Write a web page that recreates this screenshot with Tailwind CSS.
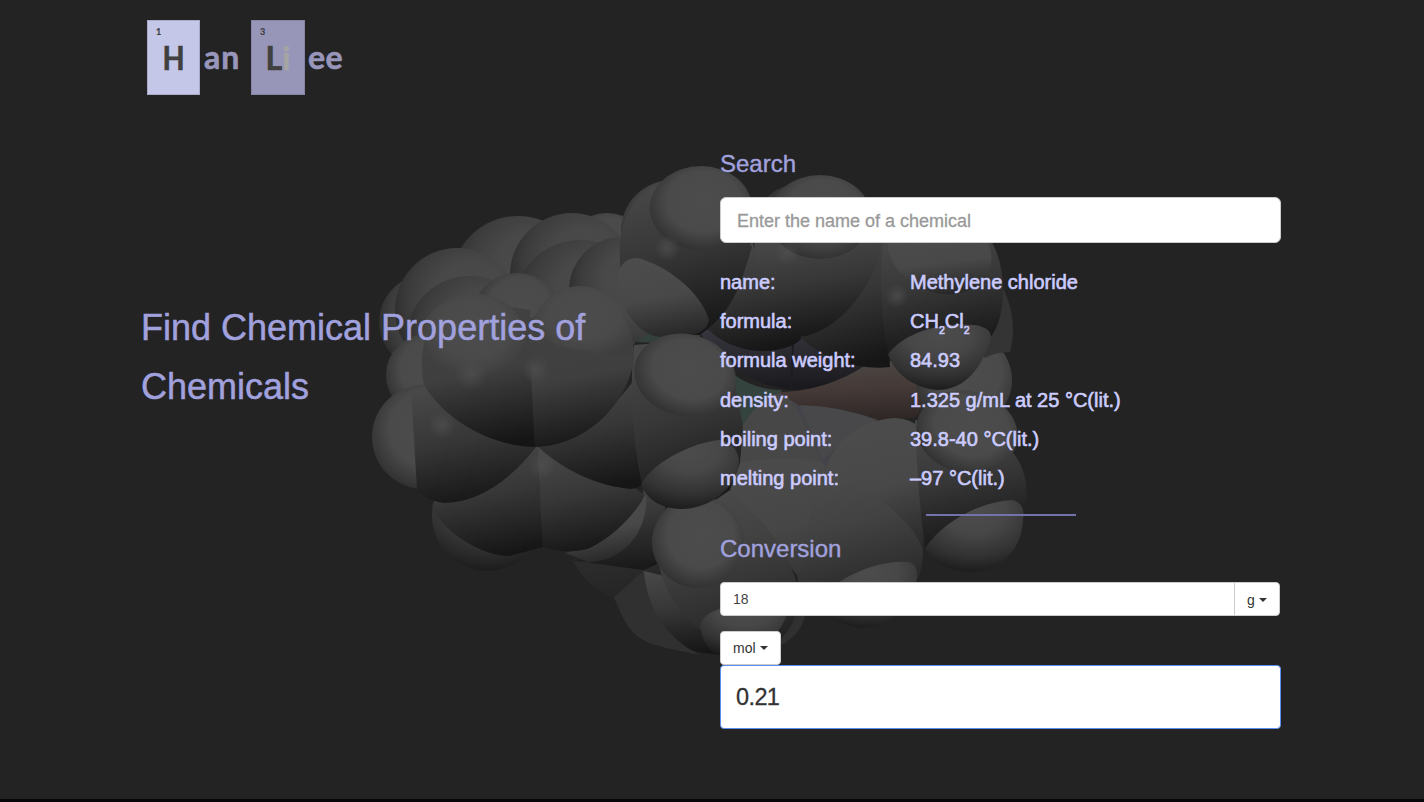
<!DOCTYPE html>
<html lang="en">
<head>
<meta charset="utf-8">
<title>Han Liee</title>
<script src="https://cdn.jsdelivr.net/npm/@tailwindcss/browser@4"></script>
</head>
<body class="relative h-[802px] w-[1424px] overflow-hidden bg-[#232323] font-['Liberation_Sans',sans-serif]">
<svg class="absolute inset-0" width="1424" height="802" viewBox="0 0 1424 802">
  <defs>
    <radialGradient id="s" cx=".5" cy=".15" r=".9"><stop offset="0" stop-color="#4c4c4c"/><stop offset=".35" stop-color="#474747"/><stop offset=".7" stop-color="#323232"/><stop offset="1" stop-color="#181818"/></radialGradient>
    <radialGradient id="r" cx=".62" cy=".42" r=".68"><stop offset="0" stop-color="#4a4a4a"/><stop offset=".45" stop-color="#484848"/><stop offset=".75" stop-color="#3c3c3c"/><stop offset="1" stop-color="#2a2a2a"/></radialGradient>
    <radialGradient id="h" cx=".53" cy=".42" r=".6"><stop offset="0" stop-color="#4c4c4c"/><stop offset=".6" stop-color="#4a4a4a"/><stop offset="1" stop-color="#303030"/></radialGradient>
    <radialGradient id="f" cx=".5" cy=".42" r=".6"><stop offset="0" stop-color="#4c4c4c"/><stop offset=".6" stop-color="#4a4a4a"/><stop offset="1" stop-color="#3e3e3e"/></radialGradient>
    <linearGradient id="c" x1=".35" y1="0" x2=".55" y2="1"><stop offset="0" stop-color="#484848"/><stop offset=".45" stop-color="#373737"/><stop offset="1" stop-color="#161616"/></linearGradient>
    <linearGradient id="a" x1=".4" y1="0" x2=".55" y2="1"><stop offset="0" stop-color="#424242"/><stop offset=".5" stop-color="#3f3f3f"/><stop offset="1" stop-color="#151515"/></linearGradient>
    <linearGradient id="g" x1=".4" y1="0" x2=".6" y2="1"><stop offset="0" stop-color="#4c4c4c"/><stop offset=".5" stop-color="#484848"/><stop offset="1" stop-color="#272727"/></linearGradient>
    <linearGradient id="w" x1=".3" y1="0" x2=".6" y2="1"><stop offset="0" stop-color="#4b4b4b"/><stop offset=".6" stop-color="#464646"/><stop offset="1" stop-color="#363636"/></linearGradient>
    <linearGradient id="v" x1=".3" y1="0" x2=".55" y2="1"><stop offset="0" stop-color="#4a4a4a"/><stop offset=".35" stop-color="#424242"/><stop offset=".75" stop-color="#2f2f2f"/><stop offset="1" stop-color="#222"/></linearGradient>
    <linearGradient id="d" x1="0" y1="0" x2=".2" y2="1"><stop offset="0" stop-color="#333"/><stop offset="1" stop-color="#1a1a1a"/></linearGradient>
    <linearGradient id="p" x1="0" y1="0" x2=".1" y2="1"><stop offset="0" stop-color="#37363f"/><stop offset="1" stop-color="#1a1a1e"/></linearGradient>
    <linearGradient id="b" x1=".4" y1="0" x2=".5" y2="1"><stop offset="0" stop-color="#4b4744"/><stop offset=".5" stop-color="#443937"/><stop offset="1" stop-color="#2e2726"/></linearGradient>
    <radialGradient id="k"><stop offset="0" stop-color="#505050" stop-opacity=".7"/><stop offset="1" stop-color="#505050" stop-opacity="0"/></radialGradient>
  </defs>
  <!-- left ring, rear atoms -->
  <circle cx="426" cy="322" r="47" fill="url(#r)"/>
  <circle cx="607" cy="256" r="43" fill="url(#h)"/>
  <circle cx="518" cy="283" r="67" fill="url(#r)"/>
  <circle cx="572" cy="275" r="62" fill="url(#r)"/>
  <circle cx="457" cy="310" r="62" fill="url(#r)"/>
  <circle cx="580" cy="306" r="66" fill="url(#r)"/>
  <circle cx="622" cy="290" r="53" fill="url(#r)"/>
  <circle cx="470" cy="340" r="64" fill="url(#r)"/>
  <circle cx="517" cy="318" r="45" fill="url(#h)"/>
  <circle cx="427" cy="375" r="41" fill="url(#h)"/>
  <circle cx="424" cy="437" r="52" fill="url(#h)"/>
  <!-- lower rear atoms -->
  <path d="M573 560L660 530L720 540L745 655C700 655 660 642 640 622C625 612 620 606 614 598C595 590 583 580 573 560Z" fill="url(#d)"/>
  <path d="M644 571L720 590L735 655C690 656 640 640 614 598Z" fill="url(#c)"/>
  <path d="M644 480L665 500V560L644 570L590 563L640 530Z" fill="url(#c)"/>
  <path d="M573 561C595 550 630 552 661 530V558L644 570Q620 565 573 561Z" fill="url(#d)"/>
  <path d="M644 571C646 600 660 635 700 655C680 650 655 648 640 638C625 628 620 610 614 598Z" fill="#303030"/>
  <circle cx="487" cy="516" r="55" fill="url(#s)"/>
  <path d="M565 553Q620 540 646 494C649 535 620 562 588 562Z" fill="url(#g)"/>
  <path d="M537 446L480 480L432 505C440 530 480 556 510 556L543 547Z" fill="url(#c)"/>
  <path d="M537 446L543 547C560 552 575 553 590 548Q625 530 645 495L620 478Z" fill="url(#c)"/>
  <path d="M411 390L430 385L537 446C510 480 480 502 445 503C430 502 420 494 417 489Z" fill="url(#c)"/>
  <path d="M537 446C570 445 600 425 634 380L646 480Q640 489 630 489C600 486 565 472 537 446Z" fill="url(#c)"/>
  <!-- middle carbon -->
  <path d="M634 345L700 340L735 380C748 420 746 460 738 490L700 509C670 509 650 503 643 488C635 455 628 400 634 345Z" fill="url(#c)"/>
  <!-- left ring, front atoms -->
  <path d="M530 310L535 447C490 446 445 420 424 385C416 345 430 310 465 300Z" fill="url(#a)"/>
  <path d="M528 320C570 290 635 310 634 358C628 405 585 446 535 447Z" fill="url(#a)"/>
  <ellipse cx="474" cy="335" rx="51" ry="41" fill="url(#f)"/>
  <path d="M534 318C545 296 560 286 582 286C615 288 634 325 634 354C620 360 605 357 585 350C560 350 540 340 534 318Z" fill="url(#f)"/>
  <circle cx="471" cy="374" r="16" fill="url(#k)"/><circle cx="536" cy="370" r="14" fill="url(#k)"/>
  <circle cx="442" cy="425" r="14" fill="url(#k)"/><circle cx="542" cy="466" r="14" fill="url(#k)"/>
  <!-- heteroatoms -->
  <path d="M636 342L660 325L700 330V345Z" fill="#34403c"/>
  <path d="M700 330H880L865 367C840 380 815 390 795 390C765 388 730 375 700 333Z" fill="url(#p)"/>
  <path d="M793 343L791 390" stroke="#1d1d22" stroke-width="2"/>
  <path d="M733 374Q755 390 782 390L775 405L744 432Z" fill="#35433f"/>
  <path d="M744 432L782 392L810 405L850 450L840 500H735Z" fill="#444349"/>
  <path d="M778 392C810 392 840 382 866 365L900 360L935 392L915 418L878 420L800 406Z" fill="url(#b)"/>
  <path d="M743 425Q760 398 780 393Q795 400 805 425L822 462Q780 462 740 465Z" fill="#474747"/>
  <path d="M800 405Q840 406 878 420L840 445L822 460Z" fill="#48484a"/>
  <!-- top carbons -->
  <circle cx="672" cy="231" r="51" fill="url(#h)"/>
  <path d="M752 240L705 325C715 340 740 351 762 351C785 351 800 343 802 337L775 315Z" fill="url(#c)"/>
  <path d="M887 235L800 337C820 358 860 371 890 367L885 300Z" fill="url(#c)"/>
  <path d="M752 247C740 285 735 310 700 335C650 335 612 300 621 235C630 190 665 175 700 180Z" fill="url(#c)"/>
  <ellipse cx="701" cy="208" rx="51" ry="42" fill="url(#h)"/>
  <circle cx="667" cy="248" r="13" fill="url(#k)"/>
  <path d="M619 275C620 262 628 258 638 258C665 265 700 290 709 320C706 335 690 337 660 337C635 334 617 305 619 275Z" fill="url(#g)"/>
  <circle cx="795" cy="222" r="37" fill="#363636"/>
  <path d="M754 235C755 275 765 305 776 321C785 334 795 338 806 336C845 325 875 285 884 235Z" fill="url(#c)"/>
  <ellipse cx="820" cy="217" rx="51" ry="42" fill="url(#h)"/>
  <circle cx="787" cy="253" r="13" fill="url(#k)"/>
  <!-- right atoms -->
  <circle cx="964" cy="380" r="48" fill="url(#h)"/>
  <path d="M990 270C1010 290 1018 325 1010 352Q995 352 985 358L960 330Z" fill="#343434"/>
  <path d="M884 232H985Q1003 255 1003 290C1003 310 999 325 991 337L888 352Q877 300 884 232Z" fill="url(#c)"/>
  <path d="M888 232H980C998 250 995 278 970 290C945 302 900 290 888 250Z" fill="url(#g)"/>
  <circle cx="897" cy="296" r="12" fill="url(#k)"/>
  <path d="M888 354C905 332 940 322 975 325Q992 328 991 338C982 368 965 390 937 390C915 388 895 375 888 354Z" fill="url(#s)"/>
  <!-- lower right atoms -->
  <path d="M740 463Q780 455 822 462L850 500L810 560L797 575L730 490Z" fill="url(#w)"/>
  <path d="M822 500C820 455 850 420 895 418Q935 420 930 470L922 560L880 560Z" fill="url(#g)"/>
  <path d="M915 420L1005 445C1025 460 1030 490 1025 510L925 547Q918 500 915 420Z" fill="url(#c)"/>
  <ellipse cx="967" cy="432" rx="51" ry="41" fill="url(#h)" transform="rotate(12 967 432)"/>
  <path d="M925 548C945 520 980 502 1012 500Q1026 503 1023 520C1022 550 1000 572 970 572C948 571 932 562 925 548Z" fill="url(#s)"/>
  <path d="M809 560C802 510 820 475 845 478C880 495 915 525 923 550Q922 590 900 600L830 612Q800 605 797 575Z" fill="url(#v)"/>
  <path d="M822 595C850 570 885 560 910 562Q918 566 917 578C910 605 890 628 862 628C840 627 828 615 822 595Z" fill="url(#s)"/>
  <!-- lower middle atoms -->
  <path d="M756 655C795 645 808 625 806 600L780 580L740 640Z" fill="#303030"/>
  <path d="M730 490C765 520 797 560 799 600C795 630 780 645 755 652L700 630C675 610 656 580 657 540Z" fill="url(#v)"/>
  <circle cx="698" cy="542" r="46" fill="url(#h)"/>
  <path d="M700 625C705 608 735 602 790 602C785 635 760 655 720 655Q703 650 700 625Z" fill="url(#s)"/>
  <!-- middle hydrogens -->
  <ellipse cx="685" cy="375" rx="51" ry="41" fill="url(#h)" transform="rotate(12 685 375)"/>
  <path d="M641 484C655 460 695 442 720 440Q738 444 739 462C735 490 710 509 680 509C660 508 647 500 641 484Z" fill="url(#s)"/>
</svg>

<div class="relative flex h-full flex-col">
  <header class="flex h-[95px] items-start pl-[147px] pt-5 font-[Lato,sans-serif] text-[32px] font-bold leading-none text-[#9896ba] [-webkit-text-stroke:0.6px_currentColor]">
    <div class="flex h-[75px] w-[53px] flex-col border border-[#a9a9c8] bg-[#c5c7e8] text-[#404040]">
      <span class="pl-2 pt-[6px] text-[9px] leading-[10px] [-webkit-text-stroke:0.2px]">1</span>
      <span class="scale-x-90 pt-[5px] text-center">H</span>
    </div>
    <span class="w-[51px] pl-1 pt-[21px] tracking-[1px]">an</span>
    <div class="flex h-[75px] w-[54px] flex-col border border-[#8785a5] bg-[#9896b8] text-[#404040]">
      <span class="pl-2 pt-[6px] text-[9px] leading-[10px] [-webkit-text-stroke:0.2px]">3</span>
      <span class="pt-[5px] text-center">L<span class="text-[#a5a5a5]">i</span></span>
    </div>
    <span class="pl-[3px] pt-[21px] tracking-[0.5px]">ee</span>
  </header>

  <main class="flex pl-[141px]">
    <h1 class="w-[579px] pt-[203px] text-[36px] leading-[59px] text-[#a1a1de] [-webkit-text-stroke:0.5px_#a1a1de]">Find Chemical Properties of<br>Chemicals</h1>
    <section class="w-[561px] pt-[54px]">
      <h2 class="text-[24px] leading-[30px] text-[#a1a1de] [-webkit-text-stroke:0.4px_#a1a1de]">Search</h2>
      <div class="mt-[18px] flex h-[46px] items-center rounded-md border border-[#ccc] bg-white px-4 pt-[2px] text-[18px] text-[#999] [-webkit-text-stroke:0.3px_#999]">Enter the name of a chemical</div>
      <dl class="mt-5 grid grid-cols-[190px_1fr] text-[20px] leading-[39.2px] text-[#ccccff] [-webkit-text-stroke:0.6px_#ccccff]">
        <dt>name:</dt><dd>Methylene chloride</dd>
        <dt>formula:</dt><dd>CH<sub class="relative bottom-auto top-[6px] align-baseline text-[10.5px] leading-none">2</sub>Cl<sub class="relative bottom-auto top-[6px] align-baseline text-[10.5px] leading-none">2</sub></dd>
        <dt>formula weight:</dt><dd>84.93</dd>
        <dt>density:</dt><dd>1.325 g/mL at 25 °C(lit.)</dd>
        <dt>boiling point:</dt><dd>39.8-40 °C(lit.)</dd>
        <dt>melting point:</dt><dd>–97 °C(lit.)</dd>
      </dl>
      <div class="ml-[206px] mt-4 h-[2px] w-[150px] bg-[#7272ad]"></div>
      <h2 class="mt-[18px] text-[24px] leading-[30px] text-[#a1a1de] [-webkit-text-stroke:0.4px_#a1a1de]">Conversion</h2>
      <div class="mt-[18px] flex h-[34px] w-[560px] rounded border border-[#ccc] bg-white text-[14px] leading-8 text-[#333]">
        <div class="w-[514px] border-r border-[#ccc] pl-3 text-[#444]">18</div>
        <div class="flex items-center gap-1 pl-3 pt-px">g<svg width="8" height="4"><path d="M0 0H8L4 4Z" fill="#333"/></svg></div>
      </div>
      <div class="mt-[15px] flex h-[34px] w-[61px] items-center gap-1 rounded border border-[#ccc] bg-white pl-3 text-[14px] text-[#333]">mol<svg width="8" height="4"><path d="M0 0H8L4 4Z" fill="#333"/></svg></div>
      <div class="flex h-[64px] items-center rounded border border-[#5a8df0] bg-white pl-[15px] text-[23.5px] tracking-[-0.6px] text-[#333] [-webkit-text-stroke:0.3px_#333]">0.21</div>
    </section>
  </main>
  <div class="mt-auto h-[3px] bg-[#03070b]"></div>
</div>
</body>
</html>
